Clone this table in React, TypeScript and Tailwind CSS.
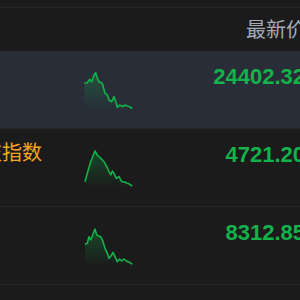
import React from "react";

type Row = {
  name: string;
  price: string;
  line: number[][];
  active?: boolean;
  hot?: boolean;
};

const ROWS: Row[] = [
  {
    name: "恒指",
    price: "24402.32",
    active: true,
    line: [[0.3,11.3],[3.3,10.7],[5.7,7.3],[7.7,9.7],[10,3],[11.7,0.7],[13.3,6.3],[15,9.7],[18.3,11.3],[21,21.3],[23.3,23],[25,28],[27.7,29.7],[30,24.7],[32.3,31.3],[33.3,35.3],[35.7,33],[38.3,34.7],[41,33],[43.3,34],[45.7,34.7],[48.3,36.7]],
  },
  {
    name: "恒生科技指数",
    price: "4721.20",
    hot: true,
    line: [[1,31.7],[3.3,23.3],[6.7,11.7],[11,1],[13.3,5],[16.7,8.3],[20,11.7],[21.7,15],[23.3,17.7],[25,21.7],[26.7,25],[28.3,21],[30,23.3],[32.3,28.3],[35,26.7],[37.7,31.7],[40,31.7],[43.3,33.3],[45.7,34.3],[48.3,36]],
  },
  {
    name: "国指",
    price: "8312.85",
    line: [[1,16.3],[3.3,15.3],[5,8.7],[6.7,12],[9,6.3],[11,1],[12.7,7],[14.3,7.7],[16.7,8.7],[19,13.7],[21,20.3],[23.3,25.3],[25,30.3],[27.7,27],[29,24.3],[31,28.7],[33.3,33.7],[35.7,31],[37.7,33],[40,31],[43.3,33.7],[45.7,34.3],[48.3,36.3]],
  },
];

function Spark({ pts, id }: { pts: number[][]; id: string }) {
  const line = pts.map((p) => p.join(",")).join(" ");
  const area = `${pts[0][0]},38 ${line} ${pts[pts.length - 1][0]},38`;
  return (
    <svg width="50" height="38" viewBox="0 0 50 38" className="block">
      <defs>
        <linearGradient id={id} x1="0" y1="0" x2="0" y2="1">
          <stop offset="0%" stopColor="#13b24a" stopOpacity="0.3" />
          <stop offset="100%" stopColor="#13b24a" stopOpacity="0" />
        </linearGradient>
      </defs>
      <polygon points={area} fill={`url(#${id})`} />
      <polyline points={line} fill="none" stroke="#13b24a" strokeWidth="1.6" strokeLinejoin="round" />
    </svg>
  );
}

export default function App() {
  return (
    <div
      className="w-[300px] h-[300px] overflow-hidden bg-[#1b1b1b]"
      style={{ fontFamily: '"Liberation Sans", "Noto Sans CJK SC", sans-serif' }}
    >
      <div className="h-[7px]" />
      <div className="w-[383px] -ml-[78px] border-t border-[#262626]">
        <div className="h-[43px] flex items-center justify-end">
          <span className="text-[20px] leading-5 text-[#a3abb8] -mr-[1px]">最新价</span>
        </div>

        {ROWS.map((r, i) => (
          <div
            key={i}
            className={`h-[78px] flex border-b border-[#262626] ${r.active ? "bg-[#282d37]" : ""}`}
          >
            <div className="w-[162px] pt-[14px] shrink-0">
              <span
                className={`text-[20px] leading-5 whitespace-nowrap ${r.hot ? "text-[#f5a623]" : "text-[#e0e0e0]"}`}
              >
                {r.name}
              </span>
            </div>
            <div className="w-[52px] shrink-0 pt-[21px]">
              <Spark pts={r.line} id={`g${i}`} />
            </div>
            <div className="flex-1 pt-[15px] text-right">
              <span className="text-[22px] leading-[22px] font-bold text-[#13b24a]">{r.price}</span>
            </div>
          </div>
        ))}
      </div>
    </div>
  );
}
